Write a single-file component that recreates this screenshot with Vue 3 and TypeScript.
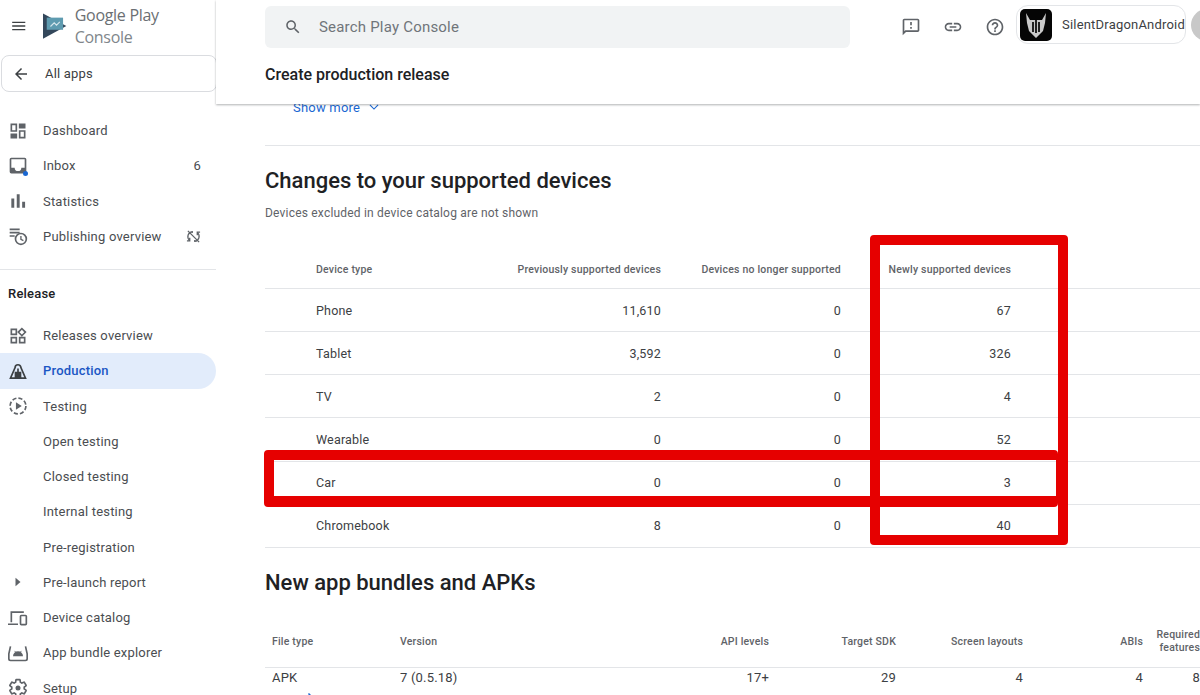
<template>
  <div class="console">
    <aside class="sidebar">
      <div class="brand">
        <svg class="menu-icon" viewBox="0 0 24 24"><path d="M3 18h18v-2H3v2zm0-5h18v-2H3v2zm0-7v2h18V6H3z" /></svg>
        <svg class="logo" viewBox="0 0 26 28">
          <path d="M0 0l25 13.5L0 27z" fill="#33475b" />
          <path d="M4 4.5h17.5v13H4z" fill="#5e9bb0" />
          <path d="M8 14l4-4 2.5 2.5L18 9" fill="none" stroke="#d5e6ec" stroke-width="1.2" />
        </svg>
        <span class="brand-name">Google Play <em>Console</em></span>
      </div>

      <button class="all-apps">
        <svg viewBox="0 0 24 24"><path d="M20 11H7.83l5.59-5.59L12 4l-8 8 8 8 1.41-1.41L7.83 13H20v-2z" /></svg>
        All apps
      </button>

      <nav class="nav-group">
        <a v-for="item in topNav" :key="item.label" class="nav-item">
          <span class="nav-icon" v-html="item.icon"></span>
          <span class="nav-label">{{ item.label }}</span>
          <span v-if="item.badge" class="nav-badge">{{ item.badge }}</span>
          <svg v-if="item.label === 'Publishing overview'" class="nav-sync" viewBox="0 0 24 24">
            <path d="M10 6.4V4.3A8 8 0 0 0 6 18.5M14 17.6v2.1a8 8 0 0 0 4-14.2M3 3l18 18M6 14v5H1.500M18 10V5h4.500" fill="none" stroke="#5f6368" stroke-width="2" />
          </svg>
        </a>
      </nav>

      <div class="side-divider"></div>
      <div class="section-label">Release</div>

      <nav class="nav-group">
        <a v-for="item in releaseNav" :key="item.label" class="nav-item" :class="{ active: item.active }">
          <span class="nav-icon" v-html="item.icon"></span>
          <span class="nav-label">{{ item.label }}</span>
        </a>
      </nav>
    </aside>

    <main class="main">
      <header class="topbar">
        <div class="toprow">
          <div class="search">
            <svg viewBox="0 0 24 24"><path d="M15.500 14h-.79l-.28-.27C15.410 12.590 16 11.110 16 9.500 16 5.910 13.090 3 9.500 3S3 5.910 3 9.500 5.910 16 9.500 16c1.610 0 3.090-.59 4.230-1.570l.27.28v.79l5 4.990L20.490 19l-4.990-5zm-6 0C7.010 14 5 11.990 5 9.500S7.010 5 9.500 5 14 7.010 14 9.500 11.990 14 9.500 14z" /></svg>
            <span>Search Play Console</span>
          </div>
          <div class="actions">
            <svg viewBox="0 0 24 24"><path d="M20 2H4c-1.100 0-1.990.9-1.990 2L2 22l4-4h14c1.100 0 2-.9 2-2V4c0-1.100-.9-2-2-2zm0 14H5.170L4 17.170V4h16v12zm-9-4h2v2h-2zm0-6h2v4h-2z" /></svg>
            <svg viewBox="0 0 24 24"><path d="M3.900 12c0-1.710 1.390-3.100 3.100-3.100h4V7H7c-2.760 0-5 2.240-5 5s2.240 5 5 5h4v-1.900H7c-1.710 0-3.100-1.390-3.100-3.100zM8 13h8v-2H8v2zm9-6h-4v1.900h4c1.710 0 3.100 1.390 3.100 3.100s-1.390 3.100-3.100 3.100h-4V17h4c2.760 0 5-2.240 5-5s-2.240-5-5-5z" /></svg>
            <svg viewBox="0 0 24 24"><path d="M11 18h2v-2h-2v2zm1-16C6.480 2 2 6.480 2 12s4.480 10 10 10 10-4.480 10-10S17.520 2 12 2zm0 18c-4.410 0-8-3.590-8-8s3.590-8 8-8 8 3.590 8 8-3.590 8-8 8zm0-14c-2.210 0-4 1.790-4 4h2c0-1.100.9-2 2-2s2 .9 2 2c0 2-3 1.750-3 5h2c0-2.250 3-2.500 3-5 0-2.210-1.790-4-4-4z" /></svg>
          </div>
          <div class="account">
            <svg class="avatar" viewBox="0 0 32 32">
              <rect width="32" height="32" rx="5" fill="#050505" />
              <path d="M6 4l4 7h12l4-7-1 10-2 8-7 7-7-7-2-8z" fill="#c9c9c9" />
              <path d="M12 13h2v10h-2zM18 13h2v10h-2zM15 11h2v13h-2z" fill="#222" />
            </svg>
            <span>SilentDragonAndroid</span>
          </div>
          <div class="user-dot"></div>
        </div>
        <h1 class="page-title">Create production release</h1>
      </header>

      <section class="content">
        <div class="show-more">
          Show more
          <svg viewBox="0 0 24 24"><path d="M5 8.500l7 7 7-7" /></svg>
        </div>

        <h2 class="heading first">Changes to your supported devices</h2>
        <p class="sub">Devices excluded in device catalog are not shown</p>

        <div class="table devices">
          <div class="tr th">
            <span class="device-name">Device type</span>
            <span>Previously supported devices</span>
            <span>Devices no longer supported</span>
            <span>Newly supported devices</span>
          </div>
          <div v-for="row in devices" :key="row.type" class="tr">
            <span class="device-name">{{ row.type }}</span>
            <span>{{ row.previous }}</span>
            <span>{{ row.removed }}</span>
            <span>{{ row.added }}</span>
          </div>
        </div>

        <h2 class="heading second">New app bundles and APKs</h2>

        <div class="table bundles">
          <div class="tr th">
            <span v-for="col in bundleCols" :key="col">{{ col }}</span>
            <span></span>
          </div>
          <div class="tr">
            <span v-for="(val, i) in bundleRow" :key="i">{{ val }}</span>
            <svg class="go" viewBox="0 0 24 24"><path d="M12 4l-1.410 1.410L16.170 11H4v2h12.170l-5.580 5.590L12 20l8-8z" /></svg>
          </div>
        </div>
      </section>
    </main>

    <!-- red annotation boxes drawn over the screenshot -->
    <div class="mark mark-col"></div>
    <div class="mark mark-row"></div>
  </div>
</template>

<script setup lang="ts">
const stroke = (d: string, extra = '') =>
  `<svg viewBox="0 0 24 24" fill="none" stroke="#5f6368" stroke-width="2" ${extra}>${d}</svg>`;

const topNav = [
  {
    label: 'Dashboard',
    icon: `<svg viewBox="0 0 24 24" fill="#5f6368"><path d="M3 3h8v10H3zm2 2v6h4V5zM13 3h8v6h-8zM3 15h8v6H3zM13 11h8v10h-8zm2 2v6h4v-6z" fill-rule="evenodd"/></svg>`,
  },
  {
    label: 'Inbox',
    badge: '6',
    icon: `<svg viewBox="0 0 24 24"><path d="M4 2h16a2 2 0 0 1 2 2v15a2 2 0 0 1-2 2H4a2 2 0 0 1-2-2V4a2 2 0 0 1 2-2zm0 2v10h4a4 4 0 0 0 8 0h4V4z" fill="#5f6368" fill-rule="evenodd"/><circle cx="21" cy="21" r="3" fill="#1a67d2"/></svg>`,
  },
  {
    label: 'Statistics',
    icon: `<svg viewBox="0 0 24 24" fill="#5f6368"><path d="M4 9h3.500v11H4zM10.500 4H14v16h-3.500zM17 13h3.500v7H17z"/></svg>`,
  },
  {
    label: 'Publishing overview',
    icon: stroke('<path d="M2 4h12M2 8h12M2 12h6"/><circle cx="15.500" cy="15.500" r="6.500"/><path d="M15.500 12v4l3 1.500" stroke-width="1.600"/>'),
  },
];

const releaseNav = [
  {
    label: 'Releases overview',
    icon: `<svg viewBox="0 0 24 24" fill="#5f6368"><path d="M16.660 4.520l2.830 2.830-2.830 2.830-2.830-2.830 2.830-2.830M9 5v4H5V5h4m10 10v4h-4v-4h4M9 15v4H5v-4h4m7.660-13.310L11 7.340 16.660 13l5.660-5.660-5.660-5.650zM11 3H3v8h8V3zm10 10h-8v8h8v-8zm-10 0H3v8h8v-8z"/></svg>`,
  },
  {
    label: 'Production',
    active: true,
    icon: `<svg viewBox="0 0 24 24" fill="none" stroke="#3c4043" stroke-width="2"><path d="M3 20.500h18L15.500 8a3.500 3.500 0 0 0-7 0zM12 9v11.500"/><path d="M9 14h6v6.500H9z" fill="#3c4043"/></svg>`,
  },
  {
    label: 'Testing',
    icon: `<svg viewBox="0 0 24 24" fill="none" stroke="#5f6368" stroke-width="2"><circle cx="12" cy="12" r="9.500" stroke-dasharray="5 2.500"/><path d="M9.500 7.500l7 4.500-7 4.500z" fill="#5f6368" stroke="none"/></svg>`,
  },
  { label: 'Open testing', icon: '' },
  { label: 'Closed testing', icon: '' },
  { label: 'Internal testing', icon: '' },
  { label: 'Pre-registration', icon: '' },
  {
    label: 'Pre-launch report',
    icon: `<svg viewBox="0 0 24 24" fill="#5f6368"><path d="M9 7l6 5-6 5z"/></svg>`,
  },
  {
    label: 'Device catalog',
    icon: `<svg viewBox="0 0 24 24" fill="none" stroke="#5f6368" stroke-width="2"><path d="M4 17V5h15M0 19.500h12"/><rect x="15" y="9" width="7" height="11" rx="1"/></svg>`,
  },
  {
    label: 'App bundle explorer',
    icon: `<svg viewBox="0 0 24 24" fill="none" stroke="#5f6368" stroke-width="2"><path d="M3 4L1 13v6a2 2 0 0 0 2 2h18a2 2 0 0 0 2-2v-6l-2-9" /><path d="M6 16a6 6 0 0 1 12 0z" fill="#5f6368" stroke="none"/><path d="M8 9.500l1.500 2M16 9.500l-1.500 2" stroke-width="1"/></svg>`,
  },
  {
    label: 'Setup',
    icon: `<svg viewBox="0 0 24 24" fill="none" stroke="#5f6368" stroke-width="2"><path d="M19.430 12.980c.04-.32.07-.64.07-.98s-.03-.66-.07-.98l2.110-1.650c.19-.15.24-.42.120-.64l-2-3.460c-.12-.22-.39-.3-.61-.22l-2.490 1c-.52-.4-1.080-.73-1.690-.98l-.38-2.650C14.460 2.180 14.250 2 14 2h-4c-.25 0-.46.18-.49.42l-.38 2.650c-.61.25-1.170.59-1.690.98l-2.490-1c-.23-.09-.49 0-.61.22l-2 3.460c-.13.22-.07.49.12.64l2.110 1.650c-.04.32-.07.65-.07.98s.03.66.07.98l-2.110 1.650c-.19.15-.24.42-.12.64l2 3.460c.12.22.39.3.61.22l2.490-1c.52.4 1.080.73 1.690.98l.38 2.650c.03.24.24.42.49.42h4c.25 0 .46-.18.49-.42l.38-2.650c.61-.25 1.170-.59 1.690-.98l2.490 1c.23.09.49 0 .61-.22l2-3.460c.12-.22.07-.49-.12-.64l-2.110-1.650z"/><circle cx="12" cy="12" r="3" fill="#5f6368" stroke="none"/></svg>`,
  },
];

const devices = [
  { type: 'Phone', previous: '11,610', removed: 0, added: 67 },
  { type: 'Tablet', previous: '3,592', removed: 0, added: 326 },
  { type: 'TV', previous: '2', removed: 0, added: 4 },
  { type: 'Wearable', previous: '0', removed: 0, added: 52 },
  { type: 'Car', previous: '0', removed: 0, added: 3 },
  { type: 'Chromebook', previous: '8', removed: 0, added: 40 },
];

const bundleCols = ['File type', 'Version', 'API levels', 'Target SDK', 'Screen layouts', 'ABIs', 'Required features'];
const bundleRow = ['APK', '7 (0.5.18)', '17+', '29', '4', '4', '8'];
</script>

<style>
html,
body {
  margin: 0;
  background: #fff;
}
</style>

<style scoped>
.console {
  position: relative;
  display: flex;
  width: 1200px;
  height: 695px;
  overflow: hidden;
  background: #fff;
  color: #3c4043;
  font-family: Roboto, "Liberation Sans", sans-serif;
  font-size: 13px;
  letter-spacing: 0.2px;
}

/* sidebar */
.sidebar {
  flex: 0 0 216px;
  width: 216px;
}

.brand {
  display: flex;
  align-items: center;
  height: 52px;
  padding-left: 10px;
}

.menu-icon {
  width: 18px;
  height: 18px;
  fill: #3c4043;
}

.logo {
  width: 25px;
  height: 27px;
  margin: 0 7px 0 16px;
}

.brand-name {
  font-family: "Open Sans", Roboto, sans-serif;
  font-size: 16px;
  letter-spacing: -0.3px;
  color: #6b6f73;
}

.brand-name em {
  font-style: normal;
  color: #80868b;
}

.all-apps {
  display: flex;
  align-items: center;
  gap: 15px;
  box-sizing: border-box;
  width: 216px;
  height: 37px;
  margin: 3px 0 21px 1px;
  padding: 0 0 0 10px;
  border: 1px solid #dadce0;
  border-radius: 8px;
  background: #fff;
  color: #3c4043;
  font: inherit;
  letter-spacing: inherit;
}

.all-apps svg {
  width: 18px;
  height: 18px;
  fill: #3c4043;
}

.nav-item {
  display: flex;
  align-items: center;
  box-sizing: border-box;
  height: 35.25px;
  padding-left: 8px;
  border-radius: 0 18px 18px 0;
  color: #4a4d51;
}

.nav-item.active {
  background: #e2ecfb;
  color: #1a56c4;
  font-weight: 500;
}

.nav-icon {
  display: block;
  flex: 0 0 20px;
  width: 20px;
  height: 20px;
  margin-right: 15px;
}

.nav-icon :deep(svg) {
  display: block;
  width: 20px;
  height: 20px;
  overflow: visible;
}

.nav-label {
  flex: 1;
}

.nav-badge {
  margin-right: 15px;
}

.nav-sync {
  width: 15px;
  height: 15px;
  margin-right: 15px;
}

.side-divider {
  height: 1px;
  margin-top: 14.5px;
  background: #e3e5e8;
}

.section-label {
  height: 48.5px;
  padding-left: 8px;
  color: #202124;
  font-weight: 500;
  line-height: 48.5px;
}

/* main */
.main {
  flex: 1;
  min-width: 0;
}

.topbar {
  position: relative;
  z-index: 2;
  box-sizing: border-box;
  height: 104px;
  margin-right: 0;
  padding: 6px 0 0 49px;
  background: #fff;
  box-shadow: 0 1px 2px rgba(60, 64, 67, 0.4);
}

.toprow {
  display: flex;
  height: 42px;
}

.search {
  display: flex;
  flex: 0 0 585px;
  align-items: center;
  gap: 17px;
  padding-left: 19px;
  box-sizing: border-box;
  border-radius: 6px;
  background: #f1f3f4;
  color: #70757a;
  font-size: 15px;
}

.search svg {
  width: 18px;
  height: 18px;
  fill: #5f6368;
}

.actions {
  display: flex;
  gap: 22px;
  align-items: center;
  margin: 0 11px 0 51px;
}

.actions svg {
  width: 20px;
  height: 20px;
  fill: #5f6368;
}

.account {
  display: flex;
  align-items: center;
  box-sizing: border-box;
  width: 170px;
  height: 39px;
  margin-top: -1px;
  padding-left: 3px;
  border: 1px solid #e3e5e8;
  border-radius: 12px;
}

.avatar {
  width: 32px;
  height: 32px;
  margin-right: 10px;
}

.user-dot {
  flex: none;
  width: 32px;
  height: 32px;
  margin: 3px 0 0 5px;
  border-radius: 50%;
  background: #c8c8c8;
}

.page-title {
  margin: 13px 0 0;
  color: #202124;
  font-size: 16px;
  font-weight: 500;
  line-height: 28px;
  letter-spacing: 0;
}

.content {
  padding-left: 49px;
}

.show-more {
  display: flex;
  align-items: center;
  gap: 7px;
  height: 20px;
  margin-top: -7px;
  padding-bottom: 28px;
  padding-left: 28px;
  border-bottom: 1px solid #e3e5e8;
  color: #1a67d2;
}

.show-more svg {
  width: 14px;
  height: 14px;
  fill: none;
  stroke: #1a67d2;
  stroke-width: 2;
}

.heading {
  margin: 0;
  color: #202124;
  font-size: 22px;
  font-weight: 500;
  line-height: 28px;
  letter-spacing: 0;
}

.first {
  margin-top: 21px;
}

.second {
  margin-top: 21px;
}

.sub {
  margin: 9px 0 0;
  height: 18px;
  color: #5f6368;
  font-size: 12px;
  line-height: 18px;
}

.tr {
  display: grid;
  align-items: center;
  box-sizing: border-box;
  border-bottom: 1px solid #e3e5e8;
  text-align: right;
}

.tr > :first-child {
  text-align: left;
}

.th {
  color: #5f6368;
  font-size: 10.500px;
  font-weight: 500;
}

.devices {
  margin-top: 20px;
}

.devices .tr {
  grid-template-columns: 235px 161px 180px 170px 1fr;
  height: 43.17px;
  font-size: 12.500px;
}

.devices .th {
  height: 47px;
  padding-top: 8px;
  font-size: 10.500px;
}

.device-name {
  padding-left: 51px;
}

.bundles {
  margin-top: 27px;
}

.bundles .tr {
  grid-template-columns: 135px 241px 128px 127px 127px 120px 1fr;
  height: 44px;
  padding-left: 7px;
}

.bundles .tr > :nth-child(2) {
  text-align: left;
}

.bundles .tr {
  grid-template-columns: 128px 241px 128px 127px 127px 120px 1fr;
}

.go {
  justify-self: start;
  width: 18px;
  height: 18px;
  margin-left: 28px;
  fill: #1a67d2;
}

/* annotations */
.mark {
  position: absolute;
  z-index: 3;
  box-sizing: border-box;
  border: 0 solid #e60000;
  border-radius: 4px;
}

.mark-col {
  left: 870px;
  top: 234.500px;
  width: 198px;
  height: 310px;
  border-width: 10.500px;
}

.mark-row {
  left: 264px;
  top: 449.500px;
  width: 794px;
  height: 57.500px;
  border-width: 10.500px 2px 11px 10.500px;
}
</style>
